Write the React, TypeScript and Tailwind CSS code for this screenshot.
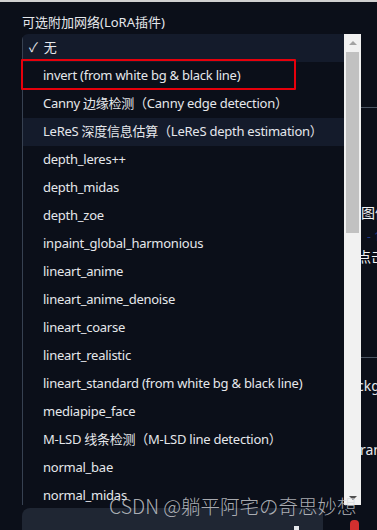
import React from "react";

const items: { label: string; bg?: boolean; check?: boolean }[] = [
  { label: "无", bg: true, check: true },
  { label: "invert (from white bg & black line)" },
  { label: "Canny 边缘检测（Canny edge detection）" },
  { label: "LeReS 深度信息估算（LeReS depth estimation）", bg: true },
  { label: "depth_leres++" },
  { label: "depth_midas" },
  { label: "depth_zoe" },
  { label: "inpaint_global_harmonious" },
  { label: "lineart_anime" },
  { label: "lineart_anime_denoise" },
  { label: "lineart_coarse" },
  { label: "lineart_realistic" },
  { label: "lineart_standard (from white bg & black line)" },
  { label: "mediapipe_face" },
  { label: "M-LSD 线条检测（M-LSD line detection）" },
  { label: "normal_bae" },
  { label: "normal_midas" },
];

export default function App() {
  return (
    <div className="relative w-[377px] h-[530px] overflow-hidden bg-[#0b0f19] text-[#e5e7eb] font-['Noto_Sans','Noto_Sans_CJK_SC',sans-serif]">
      <div className="h-[2px] bg-[#d0d0d0]" />
      <div className="pl-[22px] pt-[11px] text-[13px] leading-[18px]">可选附加网络(LoRA插件)</div>
      <div className="mt-[3px] flex">
        <div className="ml-[22px] flex h-[471px] w-[339px] overflow-hidden rounded-tl-md">
          <div className="flex w-[322px] flex-col border-l border-[#374151] text-[13px] tracking-[-0.25px]">
            {items.map((it) => (
              <div
                key={it.label}
                className={`flex h-[28px] shrink-0 items-center whitespace-nowrap ${it.bg ? "bg-[#141b2b]" : ""} ${it.check ? "pl-[6px]" : "pl-[20px]"}`}
              >
                {it.check ? <span className="mr-[6px]">✓</span> : null}
                {it.label}
              </div>
            ))}
          </div>
          <div className="flex w-[17px] flex-col items-center bg-[#f1f1f1]">
            <div className="mt-[7px] h-0 w-0 border-x-[4px] border-b-[4px] border-x-transparent border-b-[#a3a3a3]" />
            <div className="mt-[7px] h-[181px] w-[13px] bg-[#c1c1c1]" />
            <div className="flex-1" />
            <div className="mb-[5px] h-0 w-0 border-x-[4px] border-t-[4px] border-x-transparent border-t-[#505050]" />
          </div>
        </div>
        <div className="w-[16px] overflow-hidden whitespace-nowrap text-[14px]">
          <div className="mt-[73px] h-px w-full bg-[#4b5563]" />
          <div className="mt-[97px] leading-[16px] text-[#f3f4f6]">图像</div>
          <div className="mt-[8px] pl-[6px] text-[12px] leading-[16px] text-[#1e3a8a]">- 1</div>
          <div className="mt-[4px] -ml-[4px] leading-[16px] text-[#f3f4f6]">点击</div>
          <div className="mt-[92px] h-px w-full bg-[#4b5563]" />
          <div className="mt-[20px] -ml-[4px] leading-[16px]">ckground</div>
          <div className="mt-[48px] -ml-[1px] leading-[16px]">ram</div>
        </div>
      </div>
      <div className="pointer-events-none absolute left-[21px] top-[59px] h-[31px] w-[275px] rounded-[1px] border-2 border-solid border-red-600" />
      <div className="absolute left-[22px] top-[508px] h-[30px] w-[301px] rounded-tl-lg bg-[#1f2633]" />
      <div className="absolute left-[294px] top-[526px] h-[4px] w-[5px] bg-[#e5e7eb]" />
      <div className="absolute left-[350px] top-[520px] h-[10px] w-[9px] rounded-t-sm bg-[#d32f2f]" />
      <div className="absolute left-[109px] top-[494px] whitespace-nowrap text-[19.5px] font-light leading-[24px] text-[#d4d6da]/80 font-['Noto_Sans_CJK_SC',sans-serif]">
        CSDN @躺平阿宅の奇思妙想
      </div>
    </div>
  );
}
